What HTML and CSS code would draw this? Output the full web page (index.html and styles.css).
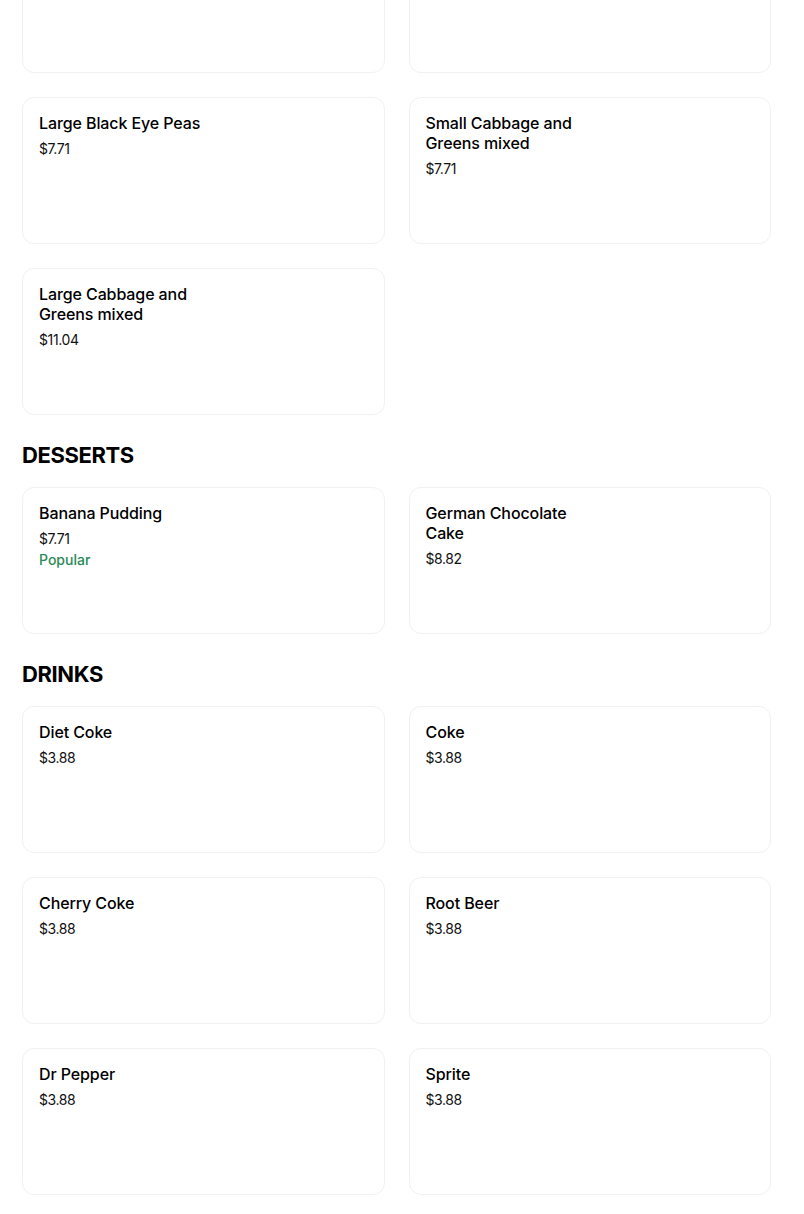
FILE: index.html
```html
<!DOCTYPE html>
<html lang="en">
<head>
  <meta charset="UTF-8" />
  <meta name="viewport" content="width=device-width, initial-scale=1.0" />
  <title>Menu</title>
  <link rel="stylesheet" href="styles.css">
</head>
<body>

<div class="menu">

  <div class="section">
    <div class="item-grid">
      <div class="item-card"></div>
      <div class="item-card"></div>

      <div class="item-card">
        <div class="item-info">
          <h3 class="item-name">Large Black Eye Peas</h3>
          <p class="item-price">$7.71</p>
        </div>
      </div>
      <div class="item-card">
        <div class="item-info">
          <h3 class="item-name">Small Cabbage and Greens mixed</h3>
          <p class="item-price">$7.71</p>
        </div>
      </div>

      <div class="item-card">
        <div class="item-info">
          <h3 class="item-name">Large Cabbage and Greens mixed</h3>
          <p class="item-price">$11.04</p>
        </div>
      </div>
    </div>
  </div>

  <div class="section">
    <h2 class="section-title">DESSERTS</h2>
    <div class="item-grid">
      <div class="item-card">
        <div class="item-info">
          <h3 class="item-name">Banana Pudding</h3>
          <p class="item-price">$7.71</p>
          <p class="item-tag">Popular</p>
        </div>
      </div>
      <div class="item-card">
        <div class="item-info">
          <h3 class="item-name">German Chocolate Cake</h3>
          <p class="item-price">$8.82</p>
        </div>
      </div>
    </div>
  </div>

  <div class="section">
    <h2 class="section-title">DRINKS</h2>
    <div class="item-grid">
      <div class="item-card">
        <div class="item-info">
          <h3 class="item-name">Diet Coke</h3>
          <p class="item-price">$3.88</p>
        </div>
      </div>
      <div class="item-card">
        <div class="item-info">
          <h3 class="item-name">Coke</h3>
          <p class="item-price">$3.88</p>
        </div>
      </div>
      <div class="item-card">
        <div class="item-info">
          <h3 class="item-name">Cherry Coke</h3>
          <p class="item-price">$3.88</p>
        </div>
      </div>
      <div class="item-card">
        <div class="item-info">
          <h3 class="item-name">Root Beer</h3>
          <p class="item-price">$3.88</p>
        </div>
      </div>
      <div class="item-card">
        <div class="item-info">
          <h3 class="item-name">Dr Pepper</h3>
          <p class="item-price">$3.88</p>
        </div>
      </div>
      <div class="item-card">
        <div class="item-info">
          <h3 class="item-name">Sprite</h3>
          <p class="item-price">$3.88</p>
        </div>
      </div>
    </div>
  </div>

</div>

</body>
</html>
```

FILE: styles.css
```css
body {
  margin: 0;
  padding: 0;
  background: #fff;
  color: #000;
  font-family: Inter, "Noto Sans", Arial, sans-serif;
}

/* page is scrolled: the first row starts above the window */
.menu { width: 749px; margin: -74px 0 0 22px; }

.section-title {
  margin: 26px 0 18px;
  font-size: 22px;
  line-height: 28px;
  font-weight: 700;
  letter-spacing: -0.4px;
}

.item-grid {
  display: grid;
  grid-template-columns: 1fr 1fr;
  column-gap: 24px;
  row-gap: 24px;
}

.item-card {
  box-sizing: border-box;
  height: 147px;
  padding: 15px 16px;
  border: 1px solid #f1f1f1;
  border-radius: 12px;
  background: #fff;
}

.item-info { max-width: 175px; }

.item-name {
  margin: 0;
  font-size: 16px;
  line-height: 20px;
  font-weight: 500;
  letter-spacing: -0.1px;
}

.item-price {
  margin: 6px 0 0;
  font-size: 14px;
  line-height: 20px;
  font-weight: 400;
  letter-spacing: -0.4px;
  color: #111;
}

.item-tag {
  margin: 1px 0 0;
  font-size: 14px;
  line-height: 20px;
  font-weight: 500;
  color: #2a8a57;
}
```
